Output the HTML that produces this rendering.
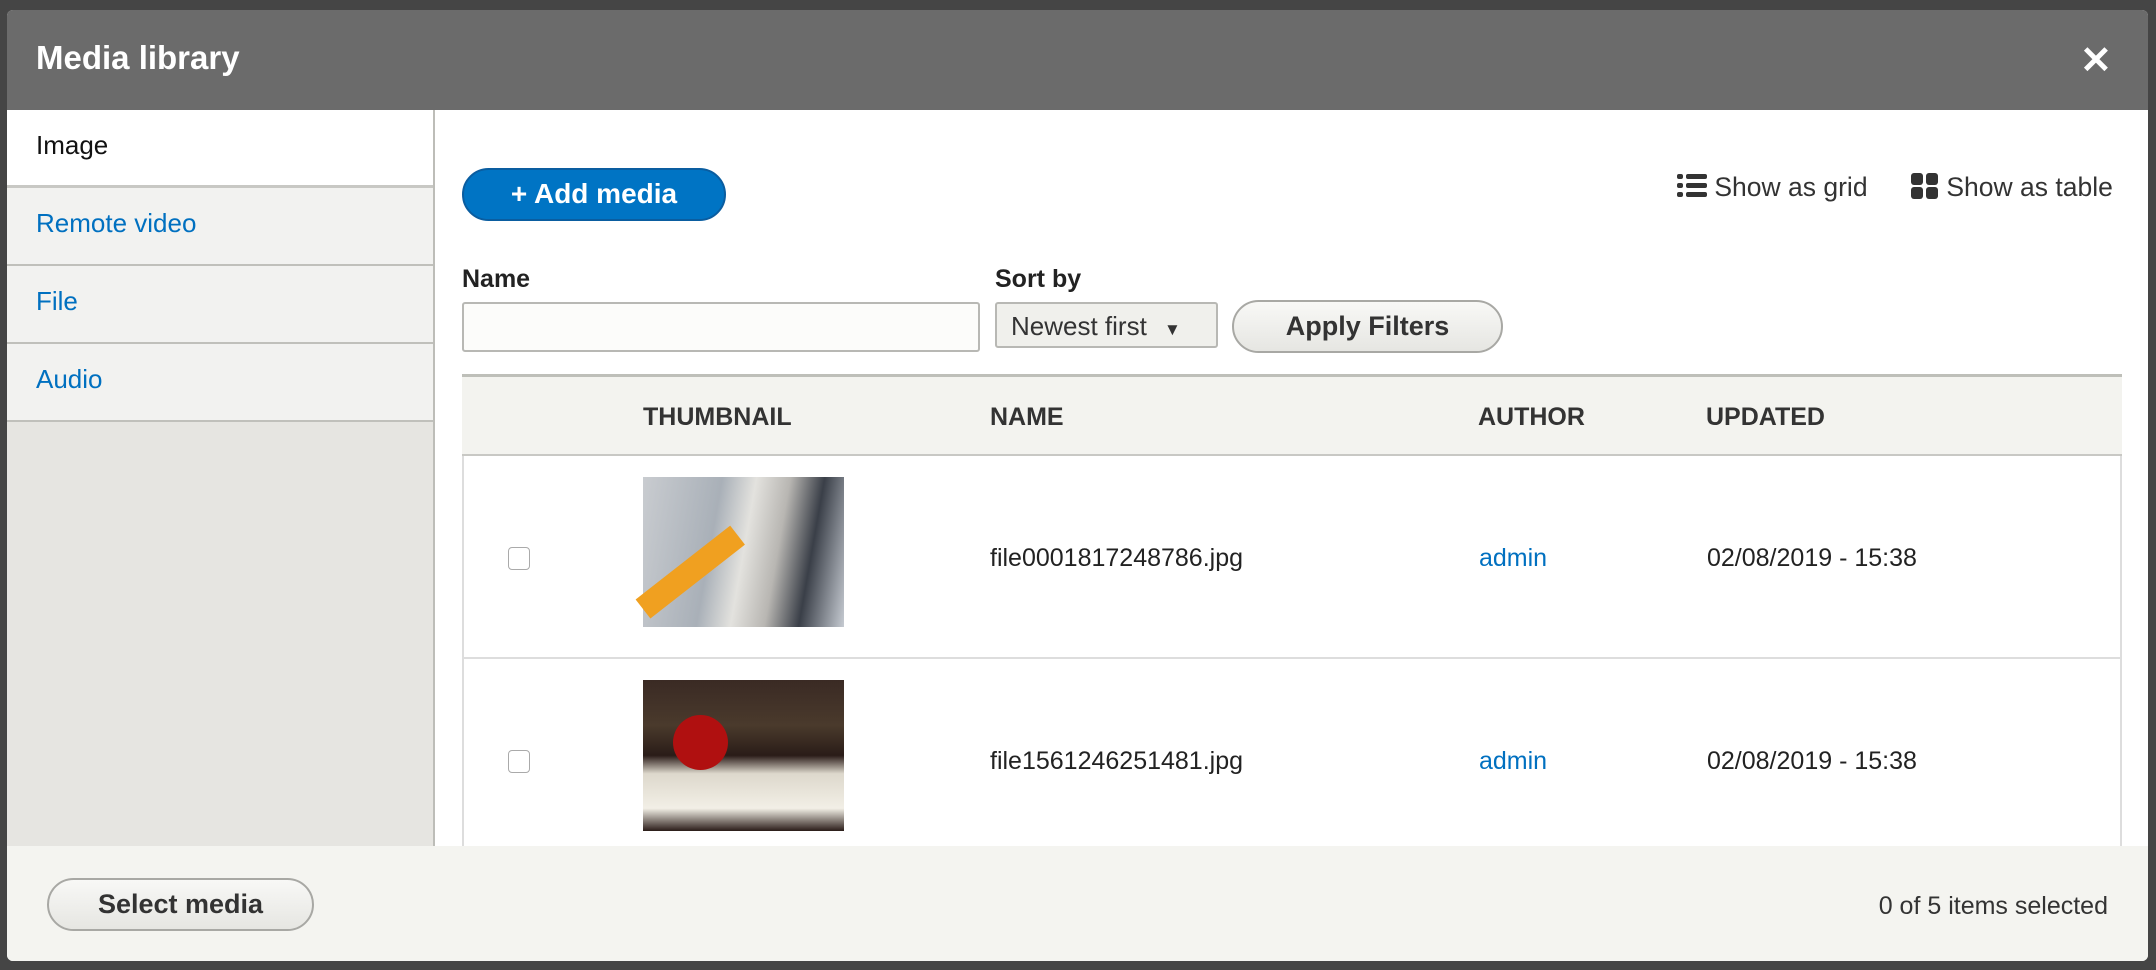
<!DOCTYPE html>
<html><head><meta charset="utf-8"><style>
*{box-sizing:border-box;margin:0;padding:0}
body{width:2156px;height:970px;background:#454545;font-family:"Liberation Sans",sans-serif;position:relative;overflow:hidden;color:#222}
.dlg{position:absolute;left:7px;top:10px;width:2141px;height:951px;background:#fff;border-radius:6px;overflow:hidden}
.hdr{position:absolute;left:0;top:0;width:100%;height:100px;background:#6b6b6b}
.hdr h1{position:absolute;left:29px;top:29px;font-size:33px;color:#fff;font-weight:bold}
.x{position:absolute;left:2073px;top:32px;font-size:38px;color:#fff;font-weight:bold;line-height:1}
.side{position:absolute;left:0;top:100px;width:428px;height:736px;background:#e6e5e1;border-right:2px solid #bdbdb8}
.tab{height:78px;border-bottom:2px solid #c0c0bb;background:#f2f2f0;color:#0070c0;font-size:26px;padding:20px 0 0 29px}
.tab.a{background:#fff;color:#111;border-bottom:3px solid #c8c8c4}
.ftr{position:absolute;left:0;top:836px;width:100%;height:115px;background:#f4f4f0}
.btn{position:absolute;border:2px solid #a8a8a4;border-radius:27px;background:linear-gradient(#f8f8f6,#e6e6e2);font-weight:bold;font-size:27px;color:#333;text-align:center}
.abs{position:absolute}
.lbl{position:absolute;font-weight:bold;font-size:25px;color:#222}
.thd{position:absolute;left:455px;top:364px;width:1660px;height:82px;background:#f3f3ef;border-top:3px solid #bebfb9;border-bottom:2px solid #c8c8c4}
.thd span{position:absolute;top:26px;font-weight:bold;font-size:25px;color:#333}
.row{position:absolute;left:455px;width:1660px;border-left:2px solid #ddd;border-right:2px solid #ddd;border-bottom:2px solid #ddd;background:#fff}
.row span{position:absolute;font-size:25px}
.cb{position:absolute;left:44px;width:22px;height:23px;border:1.5px solid #aaa;border-radius:4px;background:#fff}
</style></head><body>
<div class="dlg">
 <div class="hdr"><h1>Media library</h1><div class="x">✕</div></div>
 <div class="side">
  <div class="tab a">Image</div>
  <div class="tab">Remote video</div>
  <div class="tab">File</div>
  <div class="tab">Audio</div>
 </div>
 <div class="abs" style="left:455px;top:158px;width:264px;height:53px;border-radius:27px;background:#0074c4;border:2px solid #0a5da0;color:#fff;font-weight:bold;font-size:28px;text-align:center;line-height:48px">+ Add media</div>
 <div class="abs" style="left:1670px;top:162px;font-size:26.5px;color:#333">
  <svg width="30" height="28" viewBox="0 0 30 28" style="vertical-align:-4px"><g fill="#333"><rect x="0" y="2" width="6" height="5" rx="2"/><rect x="9" y="2" width="21" height="5" rx="2"/><rect x="0" y="11" width="6" height="5" rx="2"/><rect x="9" y="11" width="21" height="5" rx="2"/><rect x="0" y="20" width="6" height="5" rx="2"/><rect x="9" y="20" width="21" height="5" rx="2"/></g></svg> Show as grid</div>
 <div class="abs" style="left:1904px;top:162px;font-size:26.5px;color:#333">
  <svg width="28" height="28" viewBox="0 0 28 28" style="vertical-align:-4px"><g fill="#333"><rect x="0" y="1" width="12" height="12" rx="3"/><rect x="15" y="1" width="12" height="12" rx="3"/><rect x="0" y="15" width="12" height="12" rx="3"/><rect x="15" y="15" width="12" height="12" rx="3"/></g></svg> Show as table</div>
 <div class="lbl" style="left:455px;top:255px">Name</div>
 <div class="abs" style="left:455px;top:292px;width:518px;height:50px;border:2px solid #b8b8b4;border-radius:3px;background:#fcfcfa"></div>
 <div class="lbl" style="left:988px;top:255px">Sort by</div>
 <div class="abs" style="left:988px;top:292px;width:223px;height:46px;border:2px solid #b8b8b4;border-radius:3px;background:#f0f0ec;font-size:26px;color:#333;padding:7px 0 0 14px">Newest first <span style="font-size:17px;margin-left:10px">▼</span></div>
 <div class="btn" style="left:1225px;top:290px;width:271px;height:53px;line-height:48px">Apply Filters</div>
 <div class="thd"><span style="left:181px">THUMBNAIL</span><span style="left:528px">NAME</span><span style="left:1016px">AUTHOR</span><span style="left:1244px">UPDATED</span></div>
 <div class="row" style="top:446px;height:203px">
  <div class="cb" style="top:91px"></div>
  <div class="abs" style="left:179px;top:21px;width:201px;height:150px;background:linear-gradient(100deg,#c9ccd0 0%,#a9b0b8 35%,#e3e2de 50%,#b8b6b2 65%,#3a3f48 80%,#c6cbd2 100%)">
   <div class="abs" style="left:0;width:120px;height:24px;background:#f0a020;transform:rotate(-38deg);transform-origin:left;top:120px"></div></div>
  <span style="left:526px;top:88px">file0001817248786.jpg</span>
  <span style="left:1015px;top:88px;color:#0070c0">admin</span>
  <span style="left:1243px;top:88px">02/08/2019 - 15:38</span>
 </div>
 <div class="row" style="top:649px;height:220px">
  <div class="cb" style="top:91px"></div>
  <div class="abs" style="left:179px;top:21px;width:201px;height:151px;background:linear-gradient(180deg,#3a2a24 0%,#4a3a2c 30%,#2a1c18 50%,#ddd8cc 62%,#f2efe6 85%,#2a1c18 100%)">
   <div class="abs" style="left:30px;top:35px;width:55px;height:55px;border-radius:50%;background:#b01010"></div></div>
  <span style="left:526px;top:88px">file1561246251481.jpg</span>
  <span style="left:1015px;top:88px;color:#0070c0">admin</span>
  <span style="left:1243px;top:88px">02/08/2019 - 15:38</span>
 </div>
 <div class="ftr">
  <div class="btn" style="left:40px;top:32px;width:267px;height:53px;line-height:48px">Select media</div>
  <div class="abs" style="right:40px;top:46px;font-size:25px;color:#333">0 of 5 items selected</div>
 </div>
</div>
</body></html>
